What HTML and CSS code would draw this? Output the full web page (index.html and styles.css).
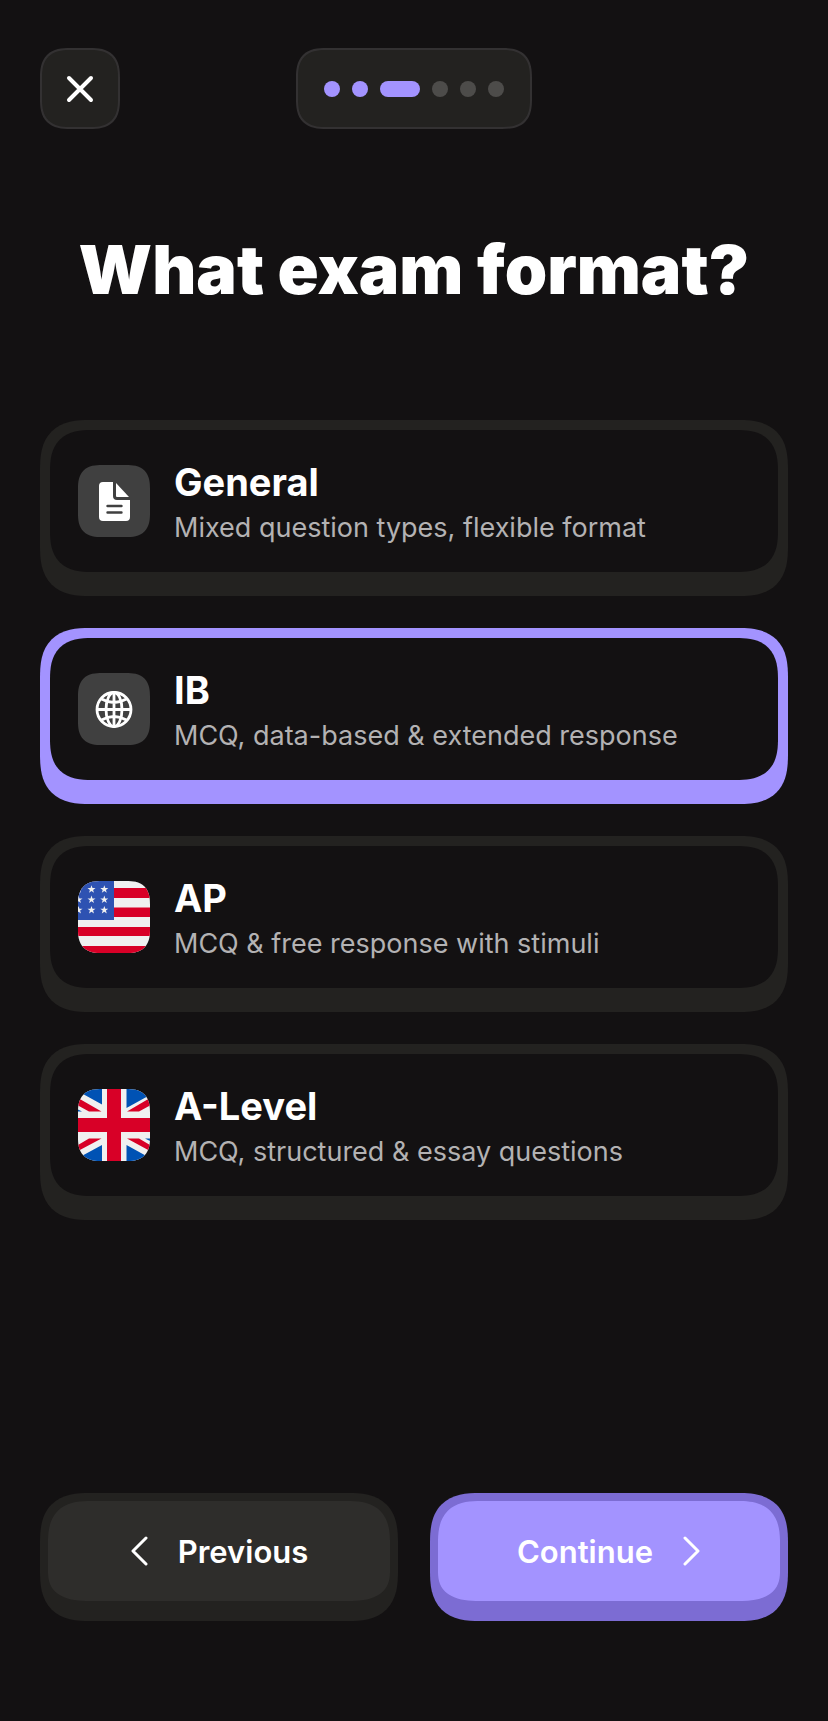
FILE: index.html
```
<!DOCTYPE html>
<html lang="en">
<head>
    <meta charset="UTF-8">
    <meta name="viewport" content="width=device-width, initial-scale=1.0">
    <title>What exam format?</title>
    <link rel="stylesheet" href="styles.css">
</head>
<body>
    <header class="topbar">
        <button type="button" class="close" aria-label="Close">
            <svg width="28" height="28" viewBox="0 0 28 28" fill="none" stroke="#fff" stroke-width="4" stroke-linecap="round">
                <path d="M3 3L25 25M25 3L3 25"/>
            </svg>
        </button>
        <div class="steps" role="img" aria-label="Step 3 of 6">
            <span class="dot done"></span>
            <span class="dot done"></span>
            <span class="dot current"></span>
            <span class="dot"></span>
            <span class="dot"></span>
            <span class="dot"></span>
        </div>
    </header>

    <h1>What exam format?</h1>

    <form class="form">
        <div class="options">
            <label class="option">
                <input type="radio" name="format" value="general">
                <span class="icon">
                    <svg viewBox="0 0 72 72">
                        <path fill="#fff" d="M25 17H35V31Q35 35 39 35H52V52Q52 56 48 56H25Q21 56 21 52V21Q21 17 25 17Z"/>
                        <path fill="#fff" d="M38 18L51 32H39Q38 32 38 31Z"/>
                        <path stroke="#404040" stroke-width="2.4" stroke-linecap="round" d="M29.5 41H43.5M29.5 47.5H43.5"/>
                    </svg>
                </span>
                <span class="text">
                    <span class="name">General</span>
                    <span class="desc">Mixed question types, flexible format</span>
                </span>
            </label>

            <label class="option">
                <input type="radio" name="format" value="ib" checked>
                <span class="icon">
                    <svg viewBox="0 0 72 72" fill="none" stroke="#fff" stroke-width="2.8">
                        <circle cx="36" cy="36.5" r="17"/>
                        <ellipse cx="36" cy="36.5" rx="8" ry="17"/>
                        <path d="M36 19.5V53.5M19 36.5H53M23.5 26Q36 33 48.5 26M23.5 47Q36 40 48.5 47"/>
                    </svg>
                </span>
                <span class="text">
                    <span class="name">IB</span>
                    <span class="desc">MCQ, data-based &amp; extended response</span>
                </span>
            </label>

            <label class="option">
                <input type="radio" name="format" value="ap">
                <span class="icon">
                    <svg viewBox="0 0 72 72">
                        <defs>
                            <path id="star" fill="#f0f0f0" d="M0 -4L1 -1.2H4L1.6 .6L2.5 3.5L0 1.7L-2.5 3.5L-1.6 .6L-4 -1.2H-1Z"/>
                        </defs>
                        <path fill="#f0f0f0" d="M0 0H72V72H0Z"/>
                        <path fill="#d80027" d="M36 7H72V17H36ZM36 26.5H72V36H36ZM0 46H72V55H0ZM0 65H72V72H0Z"/>
                        <path fill="#2e52b2" d="M0 0H36V39H0Z"/>
                        <use href="#star" x="0.5" y="8.3"/>
                        <use href="#star" x="13.5" y="8.3"/>
                        <use href="#star" x="26.3" y="8.3"/>
                        <use href="#star" x="0.5" y="18.6"/>
                        <use href="#star" x="13.5" y="18.6"/>
                        <use href="#star" x="26.3" y="18.6"/>
                        <use href="#star" x="0.5" y="29"/>
                        <use href="#star" x="13.5" y="29"/>
                        <use href="#star" x="26.3" y="29"/>
                    </svg>
                </span>
                <span class="text">
                    <span class="name">AP</span>
                    <span class="desc">MCQ &amp; free response with stimuli</span>
                </span>
            </label>

            <label class="option">
                <input type="radio" name="format" value="a-level">
                <span class="icon">
                    <svg viewBox="0 0 72 72">
                        <path fill="#f0f0f0" d="M0 0H72V72H0Z"/>
                        <path fill="#0052b4" d="M0 0H24V15.5L0 2.3ZM48.5 0H72V6L48.5 19ZM0 72H24V56L0 69ZM48.5 72H72V69L48.5 56ZM0 20.5L4 22.5H0ZM67 49.5H72V52Z"/>
                        <path fill="#d80027" d="M0 9L23.5 22.5H11L0 16.5ZM72 9L49 22.5H61L72 16.5ZM0 62L23.5 49.5H11L0 56ZM72 62L49 49.5H61L72 56Z"/>
                        <path fill="#d80027" d="M29 0H43V29H72V43H43V72H29V43H0V29H29Z"/>
                    </svg>
                </span>
                <span class="text">
                    <span class="name">A-Level</span>
                    <span class="desc">MCQ, structured &amp; essay questions</span>
                </span>
            </label>
        </div>

        <div class="actions">
            <button type="button" class="btn">
                <svg width="18" height="32" viewBox="0 0 18 32" fill="none" stroke="#fff" stroke-width="3" stroke-linecap="round" stroke-linejoin="round">
                    <path d="M16 3L3 16L16 29"/>
                </svg>
                Previous
            </button>
            <button type="submit" class="btn primary">
                Continue
                <svg width="18" height="32" viewBox="0 0 18 32" fill="none" stroke="#fff" stroke-width="3" stroke-linecap="round" stroke-linejoin="round">
                    <path d="M2 3L15 16L2 29"/>
                </svg>
            </button>
        </div>
    </form>
</body>
</html>
```
FILE: styles.css
```
* {
    box-sizing: border-box;
}
body {
    font-family: Inter, "Liberation Sans", sans-serif;
    margin: 0;
    padding: 48px 40px 100px;
    display: flex;
    flex-direction: column;
    min-height: 100vh;
    background-color: #131112;
    color: #fff;
}
button {
    font-family: inherit;
    color: inherit;
    cursor: pointer;
}
.topbar {
    display: grid;
    grid-template-columns: 1fr auto 1fr;
}
.close, .steps {
    display: flex;
    align-items: center;
    height: 81px;
    background-color: #232220;
    border: 2px solid #333132;
    border-radius: 26px;
}
.close {
    justify-content: center;
    width: 80px;
    padding: 0;
}
.steps {
    gap: 12px;
    padding: 0 26px;
}
.dot {
    width: 16px;
    height: 16px;
    border-radius: 8px;
    background-color: #4d4c4a;
}
.done, .current {
    background-color: #a393ff;
}
.current {
    width: 40px;
}
h1 {
    margin: 100px 0 111px;
    font-size: 68px;
    font-weight: 900;
    line-height: 80px;
    text-align: center;
}
.form {
    display: flex;
    flex-direction: column;
    flex: 1;
}
.options {
    display: grid;
    gap: 32px;
}
.option {
    display: flex;
    align-items: center;
    gap: 24px;
    height: 176px;
    padding: 10px 38px 24px;
    position: relative;
    background-color: #232220;
    border-radius: 44px;
    cursor: pointer;
}
/* inner face of the card, the thick bottom edge stays visible */
.option::before {
    content: "";
    position: absolute;
    inset: 10px 10px 24px;
    background-color: #131112;
    border-radius: 36px;
}
.option:has(input:checked) {
    background-color: #a393ff;
}
.option input {
    position: absolute;
    opacity: 0;
}
.icon, .text {
    position: relative;
}
.icon {
    width: 72px;
    height: 72px;
    border-radius: 20px;
    overflow: hidden;
    background-color: #404040;
}
.icon svg {
    display: block;
}
.text {
    display: flex;
    flex-direction: column;
    gap: 2px;
    padding-top: 6px;
}
.name {
    font-size: 38px;
    font-weight: 700;
    line-height: 46px;
}
.desc {
    font-size: 27px;
    line-height: 42px;
    color: #b3b2b3;
}
.actions {
    display: grid;
    grid-template-columns: 1fr 1fr;
    gap: 32px;
    margin-top: auto;
}
.btn {
    display: flex;
    align-items: center;
    justify-content: center;
    gap: 30px;
    height: 128px;
    padding: 0;
    border: 8px solid #232220;
    border-bottom-width: 20px;
    border-radius: 44px;
    background: #2e2d2b;
    font-size: 31px;
    font-weight: 600;
}
.primary {
    border-color: #7c6cd3;
    background: #a393ff;
}
@supports (corner-shape: squircle) {
    .option, .btn {
        border-radius: 50px;
        corner-shape: superellipse(1.4);
    }
    .option::before {
        border-radius: 42px;
        corner-shape: superellipse(1.4);
    }
    .close, .steps {
        border-radius: 30px;
        corner-shape: superellipse(1.4);
    }
    .icon {
        border-radius: 24px;
        corner-shape: superellipse(1.4);
    }
}
```
